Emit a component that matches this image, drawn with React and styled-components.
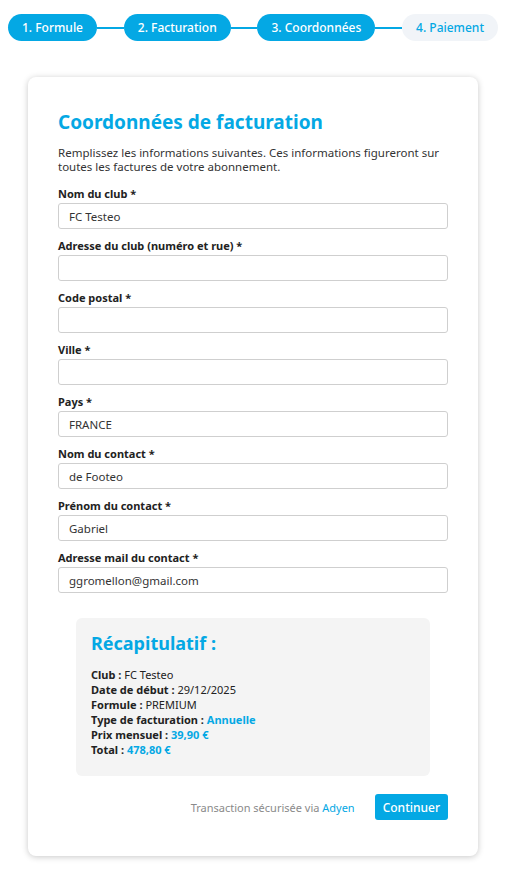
import React from 'react';
import styled, {createGlobalStyle} from 'styled-components';

const GlobalStyle = createGlobalStyle`
    body {
        margin: 0;
        background: #ffffff;
        font-family: "Noto Sans", "DejaVu Sans", sans-serif;
        color: #222;
    }
`

const BLUE = '#04a8e4';

const Page = styled.div`
    width: 505px;
    padding-top: 14px;
    padding-bottom: 12px;
`

const Stepper = styled.div`
    display: flex;
    align-items: center;
    padding: 0 7px 0 8px;
`

const Step = styled.div`
    height: 27px;
    padding: 0 14px;
    border-radius: 14px;
    display: flex;
    align-items: center;
    font-size: 12px;
    font-weight: 500;
    white-space: nowrap;
    background: ${props => props.done ? BLUE : '#f1f4f8'};
    color: ${props => props.done ? '#fff' : BLUE};
`

const Connector = styled.div`
    flex: 1;
    height: 2px;
    background: ${BLUE};
`

const Card = styled.div`
    margin: 36px 27px 0 28px;
    padding: 32px 30px 36px 30px;
    background: #fff;
    border-radius: 8px;
    box-shadow: 0 1px 6px rgba(0, 0, 0, 0.22);
`

const Title = styled.h2`
    margin: 0 0 11px 0;
    font-size: 19px;
    font-weight: 700;
    color: ${BLUE};
`

const Intro = styled.p`
    margin: 0 0 12px 0;
    font-size: 11.5px;
    line-height: 14px;
    color: #333;
`

const Field = styled.div`
    display: flex;
    flex-direction: column;
    margin-bottom: 9px;
`

const Label = styled.label`
    font-size: 11px;
    font-weight: 700;
    color: #222;
    margin-bottom: 2px;
    line-height: 15px;
`

const Input = styled.input`
    box-sizing: border-box;
    height: 26px;
    width: 100%;
    border: 1px solid #cfcfcf;
    border-radius: 3px;
    padding: 0 10px;
    font-family: inherit;
    font-size: 11.5px;
    color: #333;
    background: #fff;
    outline: none;
`

const Summary = styled.div`
    margin: 25px 18px 0 18px;
    padding: 13px 16px 19px 15px;
    background: #f4f4f4;
    border-radius: 6px;
`

const SummaryTitle = styled.h3`
    margin: 0 0 12px 0;
    font-size: 18px;
    font-weight: 700;
    color: ${BLUE};
`

const SummaryLine = styled.div`
    font-size: 11px;
    line-height: 15px;
    color: #222;
`

const Key = styled.b`
    font-weight: 700;
`

const Value = styled.span`
    color: ${props => props.accent ? BLUE : '#222'};
    font-weight: ${props => props.accent ? 700 : 400};
`

const Footer = styled.div`
    margin-top: 18px;
    display: flex;
    justify-content: flex-end;
    align-items: center;
    gap: 20px;
`

const Secure = styled.span`
    font-size: 11px;
    color: #8a8a8a;
`

const Adyen = styled.span`
    color: ${BLUE};
`

const Button = styled.button`
    height: 26px;
    padding: 0 8px;
    border: none;
    border-radius: 3px;
    background: ${BLUE};
    color: #fff;
    font-family: inherit;
    font-size: 12px;
    font-weight: 500;
`

const steps = [
    {label: '1. Formule', done: true},
    {label: '2. Facturation', done: true},
    {label: '3. Coordonnées', done: true},
    {label: '4. Paiement', done: false}
];

const fields = [
    {label: 'Nom du club *', value: 'FC Testeo'},
    {label: 'Adresse du club (numéro et rue) *', value: ''},
    {label: 'Code postal *', value: ''},
    {label: 'Ville *', value: ''},
    {label: 'Pays *', value: 'FRANCE'},
    {label: 'Nom du contact *', value: 'de Footeo'},
    {label: 'Prénom du contact *', value: 'Gabriel'},
    {label: 'Adresse mail du contact *', value: 'ggromellon@gmail.com'}
];

const recap = [
    {key: 'Club', value: 'FC Testeo'},
    {key: 'Date de début', value: '29/12/2025'},
    {key: 'Formule', value: 'PREMIUM'},
    {key: 'Type de facturation', value: 'Annuelle', accent: true},
    {key: 'Prix mensuel', value: '39,90 €', accent: true},
    {key: 'Total', value: '478,80 €', accent: true}
];

export default function App() {
    return (
        <Page>
            <GlobalStyle/>
            <Stepper>
                {steps.map((s, i) => (
                    <React.Fragment key={s.label}>
                        {i > 0 && <Connector/>}
                        <Step done={s.done}>{s.label}</Step>
                    </React.Fragment>
                ))}
            </Stepper>
            <Card>
                <Title>Coordonnées de facturation</Title>
                <Intro>
                    Remplissez les informations suivantes. Ces informations figureront sur
                    toutes les factures de votre abonnement.
                </Intro>
                {fields.map(f => (
                    <Field key={f.label}>
                        <Label>{f.label}</Label>
                        <Input defaultValue={f.value}/>
                    </Field>
                ))}
                <Summary>
                    <SummaryTitle>Récapitulatif :</SummaryTitle>
                    {recap.map(r => (
                        <SummaryLine key={r.key}>
                            <Key>{r.key} : </Key>
                            <Value accent={r.accent}>{r.value}</Value>
                        </SummaryLine>
                    ))}
                </Summary>
                <Footer>
                    <Secure>Transaction sécurisée via <Adyen>Adyen</Adyen></Secure>
                    <Button>Continuer</Button>
                </Footer>
            </Card>
        </Page>
    );
}
